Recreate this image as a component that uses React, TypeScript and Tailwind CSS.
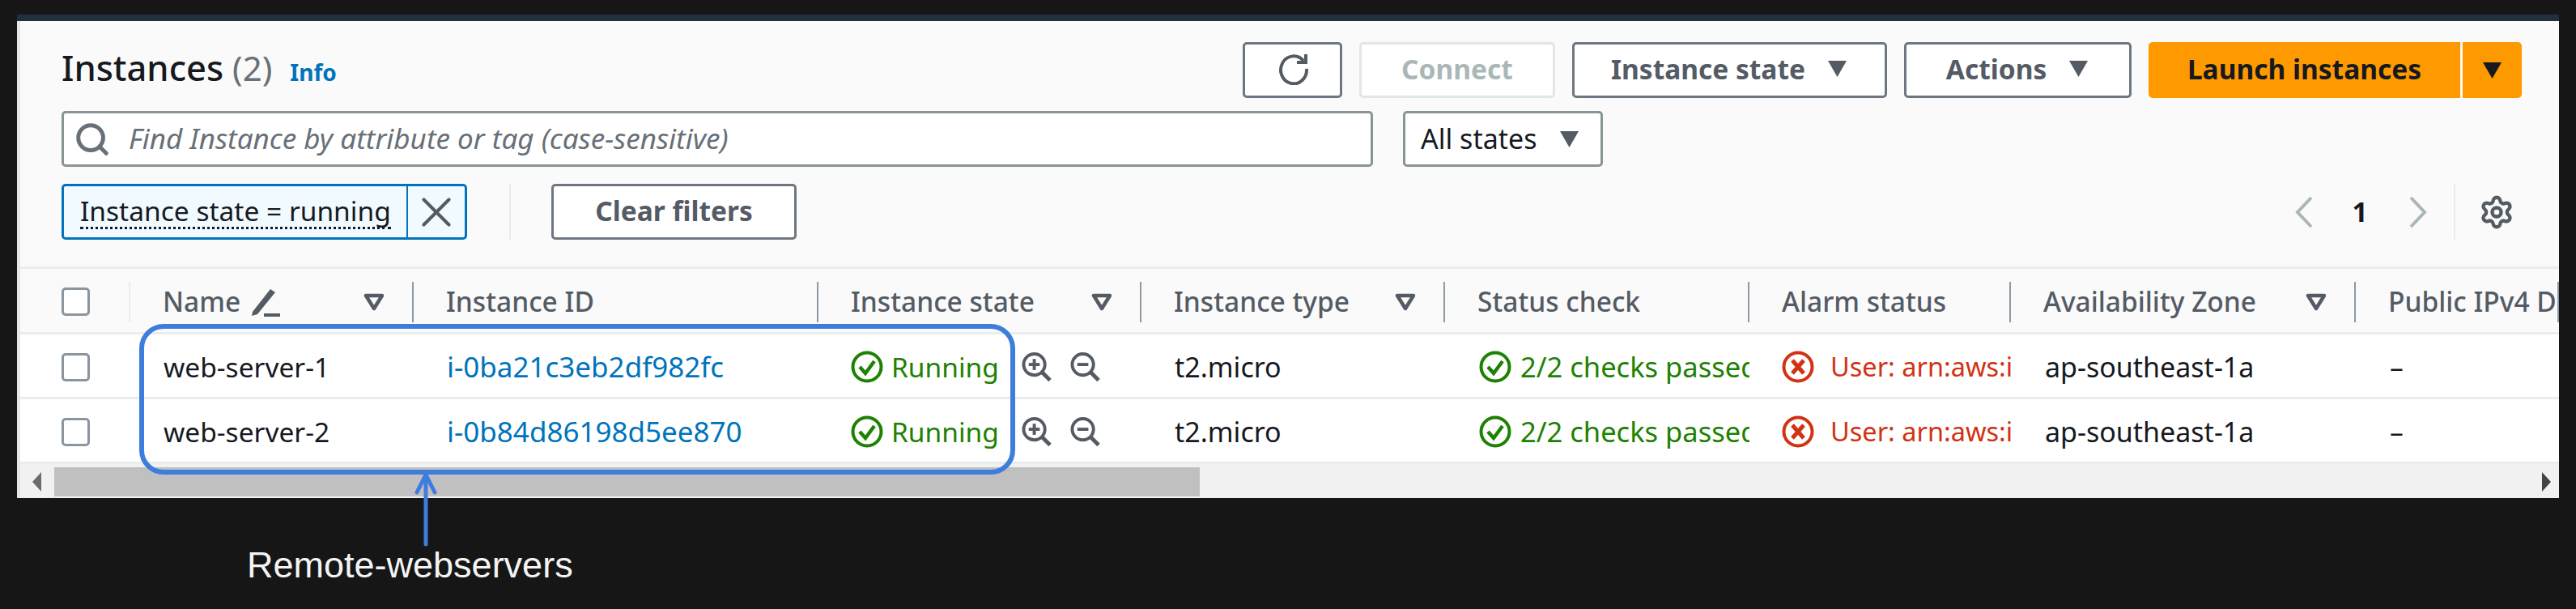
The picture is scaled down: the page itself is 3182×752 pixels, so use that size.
import React from 'react';
import { Search, Settings, X } from 'lucide-react';

const Caret = ({ className }: { className: string }) => (
  <svg viewBox="0 0 27 22" className={`w-[27px] h-[22px] ${className}`}>
    <path d="M2 1h23L13.5 21z" fill="currentColor" />
  </svg>
);

const SortCaret = () => (
  <svg viewBox="0 0 26 22" className="w-[26px] h-[22px] text-[#545b64]">
    <path d="M3 3h20L13 19z" fill="none" stroke="currentColor" strokeWidth="4.5" strokeLinejoin="round" />
  </svg>
);

const PencilIcon = () => (
  <svg viewBox="0 0 36 36" className="w-[36px] h-[36px] text-[#545b64]">
    <path d="M2 30 L24 2 L30 6 L8 33 L1 35z" fill="currentColor" />
    <path d="M16 34h20" stroke="currentColor" strokeWidth="4" />
  </svg>
);

const RefreshIcon = () => (
  <svg viewBox="0 0 40 40" className="w-[40px] h-[40px] text-[#545b64]" fill="none" stroke="currentColor" strokeWidth="4">
    <path d="M33 10 A16 17 0 1 0 37 20" />
    <path d="M36 2v10H25" />
  </svg>
);

const CheckCircle = () => (
  <svg viewBox="0 0 40 40" className="w-[40px] h-[40px] shrink-0 text-[#1d8102]" fill="none" stroke="currentColor">
    <circle cx="20" cy="20" r="17.5" strokeWidth="4" />
    <path d="M11 20l7 8 11-15" strokeWidth="4.5" />
  </svg>
);

const ErrorCircle = () => (
  <svg viewBox="0 0 40 40" className="w-[40px] h-[40px] shrink-0 text-[#d13212]" fill="none" stroke="currentColor">
    <circle cx="20" cy="20" r="17.5" strokeWidth="4" />
    <path d="M13 12l14 16M27 12L13 28" strokeWidth="5" />
  </svg>
);

const ZoomIcon = ({ plus }: { plus?: boolean }) => (
  <svg viewBox="0 0 38 38" className="w-[37px] h-[38px] shrink-0 text-[#545b64]" fill="none" stroke="currentColor" strokeWidth="4">
    <circle cx="16" cy="16" r="13.5" />
    <path d="M26 26l10 10" strokeWidth="5" />
    <path d="M9 16h14" />
    {plus && <path d="M16 9v14" />}
  </svg>
);

const PageChevron = ({ d }: { d: string }) => (
  <svg viewBox="0 0 24 40" className="h-[40px] w-[24px] text-[#aab7b8]" fill="none" stroke="currentColor" strokeWidth="4">
    <path d={d} />
  </svg>
);

const Checkbox = () => (
  <div className="w-[35px] h-[35px] rounded-[5px] border-[3px] border-[#8b959e] bg-white" />
);

const columns = [
  { name: 'Name', width: 'w-[350px]', edit: true, sort: true },
  { name: 'Instance ID', width: 'w-[500px]' },
  { name: 'Instance state', width: 'w-[399px]', sort: true },
  { name: 'Instance type', width: 'w-[375px]', sort: true },
  { name: 'Status check', width: 'w-[376px]' },
  { name: 'Alarm status', width: 'w-[323px]' },
  { name: 'Availability Zone', width: 'w-[426px]', sort: true },
  { name: 'Public IPv4 DNS', width: 'w-[251px]' },
];

const instances = [
  { name: 'web-server-1', id: 'i-0ba21c3eb2df982fc' },
  { name: 'web-server-2', id: 'i-0b84d86198d5ee870' },
];

const Button = ({ children, className }: { children: React.ReactNode; className: string }) => (
  <button className={`h-[69px] flex items-center justify-center rounded-[5px] border-[3px] border-[#6e7780] bg-white pb-[3px] font-bold text-[#545b64] ${className}`}>
    {children}
  </button>
);

export default function App() {
  return (
    <div
      className="relative h-[752px] w-[3182px] overflow-hidden bg-[#161616] pt-[18px] pl-[21px] text-[33.5px] text-[#16191f]"
      style={{ fontFamily: '"Noto Sans", sans-serif' }}
    >
      <div className="flex h-[597px] w-[3140px] flex-col overflow-hidden">
        <div className="h-[8px] shrink-0 bg-[#232f3e]" />
        <div className="flex flex-1 flex-col overflow-hidden border-l-[4px] border-[#e6e6e6] bg-[#fafafa]">
          <div className="flex h-[306px] shrink-0 flex-col gap-[16px] border-b-[3px] border-[#eaeded] pt-[26px] pr-[46px] pl-[51px]">
            <div className="flex items-center justify-between">
              <div className="flex items-baseline pb-[6px]">
                <span className="text-[43.5px] font-medium leading-[60px]">Instances</span>
                <span className="ml-[11px] text-[42px] leading-[60px] text-[#687078]">(2)</span>
                <span className="ml-[22px] text-[28px] font-bold text-[#0073bb]">Info</span>
              </div>
              <div className="flex items-center gap-[21px]">
                <Button className="w-[123px]"><RefreshIcon /></Button>
                <Button className="w-[242px] border-[#e1e6e6] bg-white text-[#aab7b8]">Connect</Button>
                <Button className="w-[389px] gap-[26px]">Instance state <Caret className="text-[#545b64]" /></Button>
                <Button className="w-[281px] gap-[26px]">Actions <Caret className="text-[#545b64]" /></Button>
                <div className="flex gap-[3px]">
                  <button className="h-[69px] w-[385px] rounded-l-[5px] bg-[#ff9900] pb-[3px] font-bold">Launch instances</button>
                  <button className="flex h-[69px] w-[73px] items-center justify-center rounded-r-[5px] bg-[#ff9900]">
                    <Caret className="text-[#16191f]" />
                  </button>
                </div>
              </div>
            </div>

            <div className="flex gap-[37px]">
              <div className="flex h-[69px] w-[1620px] items-center gap-[22px] rounded-[5px] border-[3px] border-[#879596] bg-white pl-[12px]">
                <Search size={46} strokeWidth={2.6} className="text-[#687078]" />
                <span className="text-[35px] italic text-[#687078]">Find Instance by attribute or tag (case-sensitive)</span>
              </div>
              <div className="flex h-[69px] w-[247px] items-center justify-between rounded-[5px] border-[3px] border-[#879596] bg-white pr-[25px] pl-[19px] text-[34px] text-[#16191f]">
                All states <Caret className="text-[#545b64]" />
              </div>
            </div>

            <div className="mt-[5px] flex items-center">
              <div className="flex h-[69px] w-[501px] rounded-[5px] border-[3px] border-[#0073bb] bg-[#f1faff]">
                <div className="flex w-[423px] items-center pl-[20px]">
                  <span className="whitespace-nowrap border-b-[3px] border-dotted border-[#16191f] leading-[40px]">Instance state = running</span>
                </div>
                <div className="flex flex-1 items-center justify-center border-l-2 border-[#0073bb]">
                  <X size={62} strokeWidth={1.6} className="shrink-0 text-[#545b64]" />
                </div>
              </div>
              <div className="ml-[52px] h-[69px] w-[2px] bg-[#eaeded]" />
              <Button className="ml-[50px] w-[303px]">Clear filters</Button>
              <div className="ml-auto flex items-center">
                <PageChevron d="M21 2L4 20l17 18" />
                <span className="ml-[47px] w-[20px] text-center font-bold">1</span>
                <span className="ml-[50px]"><PageChevron d="M3 2l17 18L3 38" /></span>
                <div className="ml-[32px] h-[69px] w-[2px] bg-[#eaeded]" />
                <Settings size={44} strokeWidth={2.4} className="ml-[29px] mr-[9px] text-[#545b64]" />
              </div>
            </div>
          </div>

          <div className="flex h-[81px] shrink-0 items-center border-b-[3px] border-[#eaeded] pt-[3px] font-medium text-[#545b64]">
            <div className="flex h-[50px] w-[136px] shrink-0 items-center border-r-2 border-[#eaeded] pl-[51px]">
              <Checkbox />
            </div>
            {columns.map((col) => (
              <div key={col.name} className={`flex h-[50px] shrink-0 items-center justify-between overflow-hidden whitespace-nowrap border-r-2 border-[#8d99a3] pr-[34px] pl-[40px] ${col.width}`}>
                <span className="flex items-center gap-[13px]">
                  {col.name}
                  {col.edit && <PencilIcon />}
                </span>
                {col.sort && <SortCaret />}
              </div>
            ))}
          </div>

          {instances.map((row) => (
            <div key={row.id} className="flex h-[80px] shrink-0 items-center whitespace-nowrap border-b-[3px] border-[#eaeded] bg-white pt-[3px] last:h-[83px] last:border-b-0">
              <div className="w-[136px] shrink-0 pl-[51px]"><Checkbox /></div>
              <div className="w-[350px] shrink-0 pl-[41px]">{row.name}</div>
              <div className="w-[500px] shrink-0 pl-[41px] text-[35px] text-[#0073bb]">{row.id}</div>
              <div className="flex w-[399px] shrink-0 items-center pl-[40px]">
                <CheckCircle />
                <span className="ml-[10px] w-[161px] shrink-0 text-[#1d8102]">Running</span>
                <ZoomIcon plus />
                <span className="ml-[23px]"><ZoomIcon /></span>
              </div>
              <div className="w-[375px] shrink-0 pl-[41px] text-[34px]">t2.micro</div>
              <div className="flex w-[376px] shrink-0 items-center overflow-hidden pl-[42px] text-[34.5px] text-[#1d8102]">
                <CheckCircle />
                <span className="ml-[11px]">2/2 checks passed</span>
              </div>
              <div className="flex w-[323px] shrink-0 items-center overflow-hidden pl-[40px] text-[32.5px] text-[#d13212]">
                <ErrorCircle />
                <span className="ml-[20px]">User: arn:aws:iam</span>
              </div>
              <div className="w-[426px] shrink-0 pl-[42px] text-[34px]">ap-southeast-1a</div>
              <div className="w-[251px] shrink-0 pl-[42px]">–</div>
            </div>
          ))}

          <div className="flex flex-1 items-center bg-[#f1f1f1] pt-[4px] pb-[2px]">
            <div className="flex w-[42px] justify-center">
              <svg viewBox="0 0 12 24" className="h-[24px] w-[12px] text-[#6b6b6b]"><path d="M11 0v24L0 12z" fill="currentColor" /></svg>
            </div>
            <div className="h-full w-[1415px] bg-[#c0c0c0]" />
            <div className="ml-auto mr-[10px]">
              <svg viewBox="0 0 12 24" className="h-[24px] w-[12px] text-[#444]"><path d="M1 0v24l11-12z" fill="currentColor" /></svg>
            </div>
          </div>
        </div>
      </div>

      {/* annotation over the table */}
      <div className="absolute left-[172px] top-[400px] h-[186px] w-[1082px] rounded-[30px] border-[6px] border-[#3f7ddc]" />
      <svg viewBox="0 0 30 92" className="absolute left-[511px] top-[583px] h-[92px] w-[30px] text-[#3f7ddc]" fill="none" stroke="currentColor" strokeWidth="5" strokeLinecap="round">
        <path d="M15 3v86" />
        <path d="M15 3L4 25M15 3l11 22" />
      </svg>
      <div className="absolute left-[305px] top-[672px] text-[45px] leading-[52px] text-[#f4f4f4]" style={{ fontFamily: '"Liberation Sans", sans-serif' }}>
        Remote-webservers
      </div>
    </div>
  );
}
